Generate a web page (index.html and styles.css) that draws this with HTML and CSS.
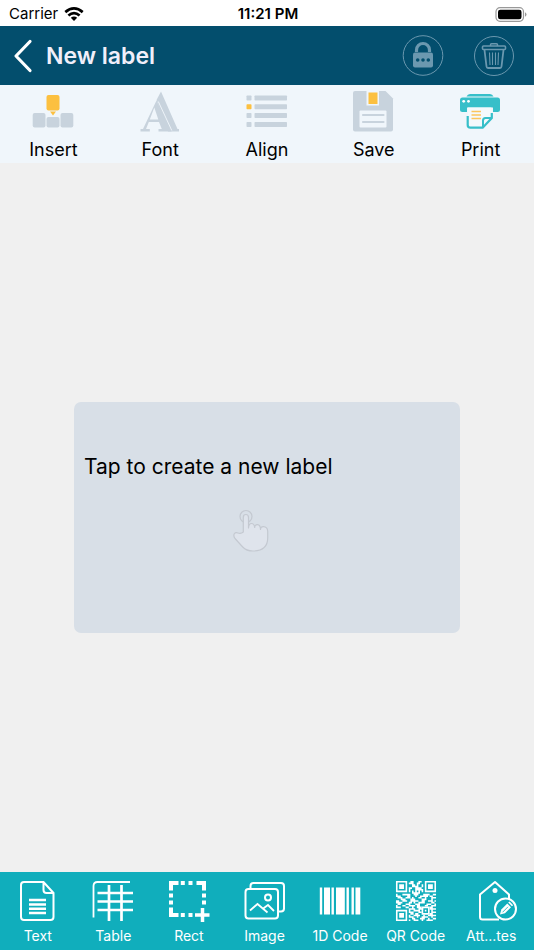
FILE: index.html
```html
<!DOCTYPE html>
<html lang="en">
<head>
<meta charset="utf-8">
<meta name="viewport" content="width=device-width, initial-scale=1">
<title>New label</title>
<link rel="stylesheet" href="styles.css">
</head>
<body>
<div class="status">
  <div class="carrier">
    <span>Carrier</span>
    <svg width="20" height="14" viewBox="0 0 20 14" fill="none" stroke="#000" stroke-width="2.7" aria-hidden="true">
      <path d="M1.3 5.1Q10-2.3 18.700 5.100"/>
      <path d="M4.400 8.500Q10 3.700 15.600 8.500"/>
      <path d="M10 14 6.800 10.800Q10 8.300 13.200 10.800Z" fill="#000" stroke="none"/>
    </svg>
  </div>
  <time class="clock">11:21 PM</time>
  <svg class="battery" width="32" height="15" viewBox="0 0 32 15" aria-hidden="true">
    <rect x="1" y=".7" width="27.500" height="13.600" rx="4" fill="none" stroke="#999" stroke-width="1.200"/>
    <rect x="3" y="2.700" width="23.500" height="9.600" rx="2.300"/>
    <path d="M30 5.200q1.500.8 1.500 2.300T30 9.800z" fill="#999"/>
  </svg>
</div>

<header class="header">
  <button class="back" type="button" aria-label="Back">
    <svg width="20" height="34" viewBox="0 0 20 34" fill="none" stroke="#fff" stroke-width="3.200" stroke-linecap="round" stroke-linejoin="round"><path d="M17 2.500 3 17l14 14.500"/></svg>
  </button>
  <h1 class="title">New label</h1>
  <button class="round" type="button" aria-label="Lock">
    <svg width="42" height="42" viewBox="0 0 42 42" fill="none" stroke="#6b98af">
      <circle cx="21" cy="20.500" r="19.800" stroke-width="1"/>
      <path d="M14.500 17v-2a6.500 6.500 0 0 1 13 0v2" stroke-width="3.200"/>
      <rect x="11" y="17.500" width="20" height="15" rx="2" fill="#6b98af" stroke="none"/>
      <g fill="#034e6d" stroke="none"><circle cx="15.700" cy="25" r="1.800"/><circle cx="21" cy="25" r="1.800"/><circle cx="26.300" cy="25" r="1.800"/></g>
    </svg>
  </button>
  <button class="round" type="button" aria-label="Delete">
    <svg width="42" height="42" viewBox="0 0 42 42" fill="none" stroke="#6b98af">
      <circle cx="21" cy="21" r="19.500" stroke-width="1"/>
      <path d="M17.500 11V9.800q0-1 1-1h5q1 0 1 1V11" stroke-width="1.500"/>
      <rect x="9.500" y="11" width="23" height="3.500" rx="1" stroke-width="1.600"/>
      <path d="M11.500 15 13.500 31.500q.2 1.500 1.500 1.500h12q1.300 0 1.500-1.500L30.500 15" stroke-width="1.800"/>
      <path d="M16.500 17.500 17 30M19.500 17.500V30M22.500 17.500V30M25.500 17.500 25 30" stroke-width="1.100"/>
    </svg>
  </button>
</header>

<nav class="tools" aria-label="Label tools">
  <button class="tool" type="button">
    <svg width="42" height="42" viewBox="0 0 42 42" fill="#c8d3dd" aria-hidden="true">
      <rect x="14.500" y="4" width="13" height="15.500" rx="2" fill="#fcc040"/><path d="M18 20.500h6l-3 4z" fill="#fcc040"/>
      <rect x=".7" y="22" width="12.800" height="14.500" rx="2"/><rect x="14.500" y="26" width="13" height="10.500" rx="2"/><rect x="28.500" y="22" width="12.800" height="14.500" rx="2"/>
    </svg>
    <span>Insert</span>
  </button>
  <button class="tool" type="button">
    <svg width="42" height="42" viewBox="0 0 42 42" fill="#c8d3dd" aria-hidden="true">
      <path d="M22 .5 38.500 38H40v2.500H29L17.500 9z"/>
      <path fill-rule="evenodd" d="M17.500 9.500 31 38h1.500v2.500H19.500V38h3.300L20 31H9.800L7 38h3.800v2.500H1.500V38H4z M15.300 16.500 10.800 28.500h8.500z"/>
      <path d="M19.300 10.500 32.800 39.500" fill="none" stroke="#f0f6fb" stroke-width=".9"/>
    </svg>
    <span>Font</span>
  </button>
  <button class="tool" type="button">
    <svg width="42" height="42" viewBox="0 0 42 42" fill="#c8d3dd" aria-hidden="true">
      <rect x=".5" y="4.500" width="5" height="5" rx=".7"/><rect y="13.300" x=".5" width="5" height="5" rx=".7" fill="#fcc040"/><rect x=".5" y="22" width="5" height="5" rx=".7"/><rect x=".5" y="31" width="5" height="5" rx=".7"/>
      <rect x="8.500" y="4.500" width="32.500" height="5" rx=".7"/><rect x="8.500" y="13.300" width="32.500" height="5" rx=".7"/><rect x="8.500" y="22" width="32.500" height="5" rx=".7"/><rect x="8.500" y="31" width="32.500" height="5" rx=".7"/>
    </svg>
    <span>Align</span>
  </button>
  <button class="tool" type="button">
    <svg width="42" height="42" viewBox="0 0 42 42" aria-hidden="true">
      <path d="M2 0h30.500L40 7.500V38.500q0 2-2 2H2q-2 0-2-2V2q0-2 2-2z" fill="#c8d3dd"/>
      <rect x="13.500" y="0" width="12.500" height="14.500" fill="#f0f6fb"/><rect x="15.500" y="1.500" width="9" height="11.500" fill="#fcc040"/>
      <rect x="6.500" y="19.500" width="27" height="17" rx="1" fill="#f0f6fb"/>
      <path d="M10 24h20.500M10 31h20.500" stroke="#c8d3dd" stroke-width="2.200" stroke-linecap="round"/>
    </svg>
    <span>Save</span>
  </button>
  <button class="tool" type="button">
    <svg width="42" height="42" viewBox="1 0 42 42" aria-hidden="true">
      <path d="M7.500 5.500q1-2.500 3.500-2.500h20q2.500 0 3.500 2.500z" fill="#37bfc9"/>
      <path d="M3.500 6.500h35Q41 6.500 41 9v9.500q0 2.500-2.500 2.500H34v-4.500H8V21H3.500Q1 21 1 18.500V9q0-2.500 2.500-2.500z" fill="#37bfc9"/>
      <circle cx="4.700" cy="10.300" r="1.400" fill="#fff"/><circle cx="9.500" cy="10.300" r="1.400" fill="#fff"/>
      <path d="M9 16.500h23.500V27l-8.500 9.500H11q-2 0-2-2z" fill="#f4f9fc"/>
      <path d="M8.700 25v9q0 2.700 2.700 2.700h12.300L32.800 27v-5" fill="none" stroke="#37bfc9" stroke-width="2.200"/>
      <path d="M24 36v-6.500q0-2.500 2.500-2.500H33" fill="none" stroke="#37bfc9" stroke-width="2"/>
      <path d="M12.500 20.500h9.500M12.500 24h9.500M12.500 27.500h9.500" stroke="#fcc55c" stroke-width="1.700"/>
    </svg>
    <span>Print</span>
  </button>
</nav>

<main class="canvas">
  <button class="card" type="button">
    <span>Tap to create a new label</span>
    <svg class="hand" width="36" height="44" viewBox="0 0 36 44" fill="#dfe4ec" stroke="#c4c9d1" stroke-width="1.200" stroke-linejoin="round" aria-hidden="true">
      <circle cx="13" cy="7.500" r="6" fill="none"/>
      <path d="M10.300 23V8.500q0-3 2.600-3t2.600 3V19q.3-4.500 3-4.500t3.200 4q0-3 2.800-2.800 3 .3 3 4.800.2-3 3-2.800 4 .3 4.200 4.500V29q0 12.500-14 13-7 .3-11-4L2 29.500Q0 26.500 1.500 24.500q1-1.300 3.500-.5 3 1 5.300-1z"/>
    </svg>
  </button>
</main>

<nav class="elements" aria-label="Add element">
  <button class="element" type="button">
    <svg width="42" height="42" viewBox="0 0 42 42" fill="none" stroke="#fff" stroke-width="2" aria-hidden="true">
      <path d="M26.500 2H7Q4 2 4 5v32q0 3 3 3h26.500q3 0 3-3V13zM26.500 2v8q0 3 3 3h7"/>
      <path d="M12 20h17M12 24.500h17M12 28.700h17M12 33h17" stroke-width="2.400"/>
    </svg>
    <span>Text</span>
  </button>
  <button class="element" type="button">
    <svg width="42" height="42" viewBox="0 0 42 42" fill="none" stroke="#fff" aria-hidden="true">
      <path d="M1.500 37.500V6Q1.500 2 5.500 2H38" stroke-width="1.800"/>
      <path d="M5.500 13H41M5.500 21.500H41M5.500 30H41M17 5v36M29.500 5v36" stroke-width="2.700"/>
    </svg>
    <span>Table</span>
  </button>
  <button class="element" type="button">
    <svg width="42" height="42" viewBox="0 0 42 42" fill="none" stroke="#fff" stroke-width="4" aria-hidden="true">
      <path d="M3 10.500V3h7.500M28.500 3H36v7.500M3 27.500V35h7.500M12.800 3h4M20.500 3h4M12.800 35h4M20.500 35h4M3 13.500v4M3 20.500v4M36 13.500v4M36 20.500v4"/>
      <path d="M27 35h14.500M34.500 28v14" stroke-width="3.500"/>
    </svg>
    <span>Rect</span>
  </button>
  <button class="element" type="button">
    <svg width="42" height="42" viewBox="0 0 42 42" fill="none" stroke="#fff" stroke-width="2" aria-hidden="true">
      <rect x="2.500" y="9" width="32.500" height="29.500" rx="3"/>
      <path d="M7.500 8.500V6q0-3 3-3H38q3 0 3 3V28.500q0 3-3 3h-2"/>
      <circle cx="25" cy="17.500" r="3"/>
      <path d="M7 30.500 14.500 24l10 8.500M19.500 29l5.500-4 6 6" stroke-width="1.800"/>
    </svg>
    <span>Image</span>
  </button>
  <button class="element" type="button">
    <svg width="42" height="42" viewBox="0 0 42 42" fill="#fff" aria-hidden="true">
      <path d="M.8 7.500h2.400v27H.8zM5 7.500h6v27H5zM12.500 7.500h2.400v27h-2.400zM17 7.500h8.800v27H17zM27.500 7.500h2.400v27h-2.400zM32.500 7.500h2.400v27h-2.400zM36.500 7.500h4.800v27h-4.800z"/>
    </svg>
    <span>1D Code</span>
  </button>
  <button class="element" type="button">
    <svg width="42" height="42" viewBox="-.6 -.6 26.200 26.200" fill="none" stroke="#fff" aria-hidden="true">
      <path d="M.5 .5h6v6h-6zM18.500 .5h6v6h-6zM.5 18.500h6v6h-6zM16.500 16.500h4v4h-4z"/>
      <path d="M2 3.500h3M20 3.500h3M2 21.500h3" stroke-width="3"/>
      <path d="M9 .5h2m3 0h2M8 1.500h3m2 0h2M10 2.500h2m1 0h1m2 0h1M10 3.500h4m2 0h1M8 4.500h2m2 0h4M8 5.500h1m3 0h5M8 6.500h1m1 0h1m1 0h1m1 0h1m1 0h1M10 7.500h5M0 8.500h1m3 0h5m2 0h3m3 0h4m2 0h2M0 9.500h3m4 0h2m3 0h1m2 0h5m1 0h2M1 10.500h3m2 0h3m1 0h1m3 0h2m2 0h1m3 0h3M3 11.500h3m3 0h3m4 0h3m3 0h1M0 12.500h2m2 0h3m2 0h5m2 0h2m2 0h3m1 0h1M0 13.500h4m4 0h2m1 0h1m2 0h4m4 0h2M1 14.500h2m3 0h3m3 0h3m4 0h3m2 0h1M0 15.500h1m3 0h2m2 0h4m1 0h2m3 0h2m2 0h3M0 16.500h3m3 0h2m2 0h1m2 0h3m5 0h2M8 17.500h4m2 0h3m4 0h4M8 18.500h1m2 0h4m3 0h1m3 0h1M8 19.500h3m3 0h2m6 0h3M9 20.500h2m1 0h2m7 0h2M8 21.500h1m2 0h4m2 0h1m2 0h5M8 22.500h3m2 0h1m2 0h4m2 0h1M10 23.500h2m3 0h3m2 0h1m2 0h2M8 24.500h1m2 0h3m2 0h1m2 0h4"/>
    </svg>
    <span>QR Code</span>
  </button>
  <button class="element" type="button">
    <svg width="54" height="42" viewBox="0 0 54 42" fill="none" stroke="#fff" stroke-width="2" stroke-linejoin="round" aria-hidden="true">
      <path d="M35 39.500H18.500q-2.500 0-2.500-2.500V14.500L31 2l14 12.500V19"/>
      <circle cx="31" cy="10.500" r="2.500" fill="#fff" stroke="none"/>
      <circle cx="41.500" cy="29" r="10.500" fill="#10aebc"/>
      <path d="m36 34.500 1.300-5 6-6 3.700 3.700-6 6z" fill="#fff" stroke="none"/>
      <path d="m44.200 22.600 1.300-1.100 3.700 3.700-1.300 1.100z" fill="#fff" stroke="none"/>
      <path d="m38.500 32.300 5.500-5.500" stroke="#10aebc" stroke-width=".8"/>
    </svg>
    <span>Att...tes</span>
  </button>
</nav>
</body>
</html>
```

FILE: styles.css
```css
* {
  box-sizing: border-box;
}

body {
  margin: 0;
  min-height: 100vh;
  display: flex;
  flex-direction: column;
  background: #f0f0f0;
  color: #000;
  font-family: Inter, "Liberation Sans", sans-serif;
}

button {
  margin: 0;
  padding: 0;
  border: 0;
  background: none;
  color: inherit;
  font: inherit;
  cursor: pointer;
}

svg {
  display: block;
  flex: none;
}

.status {
  display: grid;
  grid-template-columns: 1fr auto 1fr;
  align-items: center;
  height: 26px;
  padding: 0 7px 0 9px;
  background: #fff;
  font-size: 15px;
  line-height: 28px;
}

.carrier {
  display: flex;
  align-items: center;
  gap: 6px;
}

.clock {
  font-weight: 600;
}

.battery {
  justify-self: end;
}

.header {
  display: flex;
  align-items: center;
  height: 59px;
  padding: 0 19px 0 13px;
  background: #034e6d;
}

.title {
  flex: 1;
  margin: 0 0 0 13px;
  color: #f0effa;
  font-size: 23px;
  font-weight: 600;
  line-height: 32px;
}

.round + .round {
  margin-left: 29px;
}

.tools {
  display: grid;
  grid-template-columns: repeat(5, 1fr);
  height: 78px;
  background: #f0f6fb;
}

.tool,
.element {
  display: flex;
  flex-direction: column;
  align-items: center;
  padding-top: 6px;
}

.tool {
  gap: 5px;
  font-size: 18px;
  line-height: 24px;
}

.canvas {
  flex: 1;
  display: grid;
  place-items: center;
  padding: 24px 74px;
}

.card {
  display: flex;
  flex-direction: column;
  width: 100%;
  aspect-ratio: 5 / 3;
  padding: 50px 10px 0;
  border-radius: 7px;
  background: #d8dfe7;
  font-size: 21px;
  line-height: 30px;
  text-align: left;
}

.hand {
  margin: 27px auto 0 149px;
}

.elements {
  display: grid;
  grid-template-columns: repeat(7, 1fr);
  height: 78px;
  padding-right: 5px;
  background: #10aebc;
  color: #fff;
}

.element {
  gap: 5px;
  padding-top: 8px;
  font-size: 14px;
  line-height: 18px;
}
```
